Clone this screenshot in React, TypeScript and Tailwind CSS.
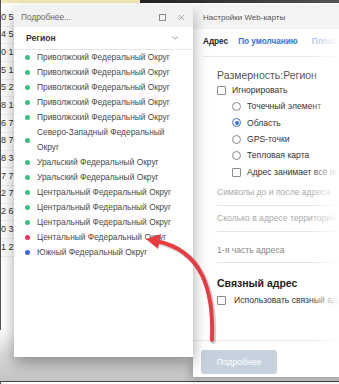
import { ChevronDown, X } from 'lucide-react';

const tableRows = ['0 59', '4 59', '0 12', '5 19', '5 27', '8 10', '6 74', '8 76', '8 34', '7 79', '2 77', '2 63', '0 32', '1 27'];

const GREEN = 'bg-[#3fbf7f]';

const regions = [
  { name: 'Приволжский Федеральный Округ', dot: GREEN },
  { name: 'Приволжский Федеральный Округ', dot: GREEN },
  { name: 'Приволжский Федеральный Округ', dot: GREEN },
  { name: 'Приволжский Федеральный Округ', dot: GREEN },
  { name: 'Приволжский Федеральный Округ', dot: GREEN },
  { name: 'Северо-Западный Федеральный Округ', dot: GREEN },
  { name: 'Уральский Федеральный Округ', dot: GREEN },
  { name: 'Уральский Федеральный Округ', dot: GREEN },
  { name: 'Центральный Федеральный Округ', dot: GREEN },
  { name: 'Центральный Федеральный Округ', dot: GREEN },
  { name: 'Центральный Федеральный Округ', dot: GREEN },
  { name: 'Центальный Федеральный Округ', dot: 'bg-[#f0345a]' },
  { name: 'Южный Федеральный Округ', dot: 'bg-[#3d63df]' },
];

function Checkbox() {
  return <span className="w-[9px] h-[9px] shrink-0 border border-[#8a8a8a] rounded-[1px] bg-white" />;
}

function Radio({ checked }: { checked?: boolean }) {
  return (
    <span
      className={`w-[9px] h-[9px] shrink-0 rounded-full border bg-white flex items-center justify-center ${
        checked ? 'border-[#3d6fd8]' : 'border-[#8a8a8a]'
      }`}
    >
      {checked && <span className="w-[4px] h-[4px] rounded-full bg-[#3d6fd8]" />}
    </span>
  );
}

function DetailsPopup() {
  return (
    <div className="absolute left-[14px] top-[7px] w-[179px] h-[350px] bg-white shadow-[0_6px_14px_rgba(0,0,0,0.35)] flex flex-col">
      <div className="h-[20px] bg-[#f2f2f2] flex items-center pl-[7px] pr-[7px] text-[8.3px] text-[#666]">
        <span className="flex-1">Подробнее...</span>
        <span className="w-[7px] h-[7px] border border-[#8a8a8a] mr-[11px]" />
        <X size={9} strokeWidth={1.6} className="text-[#777]" />
      </div>
      <div className="h-[23px] flex items-center justify-between pl-[12px] pr-[13px] border-b border-[#e6e6e6]">
        <span className="text-[8.6px] font-bold text-[#333]">Регион</span>
        <ChevronDown size={10} strokeWidth={1.6} className="text-[#666]" />
      </div>
      <div className="flex flex-col">
        {regions.map((r, i) => (
          <div key={i} className="flex items-center">
            <span className={`w-[5px] h-[5px] rounded-full shrink-0 ml-[11px] mr-[7px] ${r.dot}`} />
            <span className="max-w-[136px] text-[8.4px] leading-[15px] text-[#4a4a4a]">{r.name}</span>
          </div>
        ))}
      </div>
    </div>
  );
}

function SettingsPanel() {
  return (
    <div className="absolute left-[193px] top-[7px] w-[190px] h-[370px] bg-white shadow-[-3px_2px_8px_rgba(0,0,0,0.22)] flex flex-col">
      <div className="h-[22px] bg-[#f4f4f4] flex items-center pl-[10px] text-[8px] text-[#555] whitespace-nowrap">
        Настройки Web-карты
      </div>
      <div className="h-[28px] ml-[10px] flex items-center border-b border-[#e6e6e6] text-[8.2px] whitespace-nowrap">
        <span className="font-bold text-[#222]">Адрес</span>
        <span className="ml-[10px] font-bold text-[#3d6fd8]">По умолчанию</span>
        <span className="ml-[14px] font-bold text-[#9db4e6]">Площади</span>
      </div>
      <div className="pl-[24px] flex flex-col whitespace-nowrap text-[8.6px] text-[#333]">
        <div className="mt-[11px] h-[14px] leading-[14px] text-[10.5px] text-[#555]">Размерность:Регион</div>
        <div className="h-[16.4px] flex items-center gap-[6px]">
          <Checkbox />
          <span>Игнорировать</span>
        </div>
        <div className="pl-[15px] flex flex-col">
          <div className="h-[16.4px] flex items-center gap-[6px]">
            <Radio />
            <span>Точечный элемент</span>
          </div>
          <div className="h-[16.4px] flex items-center gap-[6px]">
            <Radio checked />
            <span>Область</span>
          </div>
          <div className="h-[16.4px] flex items-center gap-[6px]">
            <Radio />
            <span>GPS-точки</span>
          </div>
          <div className="h-[16.4px] flex items-center gap-[6px]">
            <Radio />
            <span>Тепловая карта</span>
          </div>
          <div className="h-[16.4px] flex items-center gap-[6px]">
            <Checkbox />
            <span>Адрес занимает всё поле</span>
          </div>
        </div>
        <div className="h-[26px] flex items-end pb-[7px] border-b border-[#e3e3e3] text-[#aaa] leading-[12px]">
          Символы до и после адреса
        </div>
        <div className="h-[26px] flex items-end pb-[7px] border-b border-[#e3e3e3] text-[#aaa] leading-[12px]">
          Сколько в адресе территорий
        </div>
        <div className="h-[31px] flex items-end pb-[6px] border-b border-[#e3e3e3] text-[#888] leading-[12px]">
          1-я часть адреса
        </div>
        <div className="mt-[13px] h-[14px] leading-[14px] text-[10.5px] font-bold text-[#222]">Связный адрес</div>
        <div className="mt-[2px] h-[16px] flex items-center gap-[8px]">
          <Checkbox />
          <span>Использовать связный адрес</span>
        </div>
      </div>
      <div className="mt-auto h-[37px] border-t border-[#e6e6e6] pl-[8px] pt-[7px]">
        <button className="w-[76px] h-[24px] rounded-[3px] bg-[#c6d1de] text-white text-[8.6px]">Подробнее</button>
      </div>
    </div>
  );
}

export default function App() {
  return (
    <div className="relative w-[339px] h-[384px] overflow-hidden bg-white font-['Liberation_Sans','Arial',sans-serif]">
      {/* page behind the windows */}
      <div className="absolute inset-y-0 left-0 w-[1px] bg-[#555]" />
      <div className="flex h-[3px]">
        <div className="w-[140px] bg-[#efe6b4]" />
        <div className="flex-1 bg-gradient-to-r from-[#222] to-[#555]" />
      </div>
      <div className="flex flex-col pt-[6px] pl-[1px]">
        {tableRows.map((v) => (
          <div key={v} className="h-[17.7px] flex items-center border-b border-[#f0f0f0] text-[9px] text-[#333] whitespace-nowrap">
            {v}0
          </div>
        ))}
      </div>
      <div className="absolute left-0 right-0 top-[330px] h-[51px] bg-gradient-to-b from-white via-[#d8d8d8] to-[#c4c4c4]" />
      <div className="absolute left-0 right-0 top-[381px] h-[1px] bg-[#444]" />

      <SettingsPanel />
      <DetailsPopup />

      {/* fade on the right edge */}
      <div className="absolute right-0 top-[29px] w-[30px] h-[346px] bg-gradient-to-r from-white/0 to-white" />

      <svg className="absolute inset-0" width="339" height="384" viewBox="0 0 339 384">
        <path d="M212 340 C 214 290, 202 250, 156 241" fill="none" stroke="rgba(0,0,0,0.18)" strokeWidth="5" strokeLinecap="round" transform="translate(1.5 1.5)" />
        <path d="M212 340 C 214 290, 202 250, 156 241" fill="none" stroke="#ea3b40" strokeWidth="4" strokeLinecap="round" />
        <polygon points="146,239 161,234 158,249" fill="#ea3b40" />
      </svg>
    </div>
  );
}
